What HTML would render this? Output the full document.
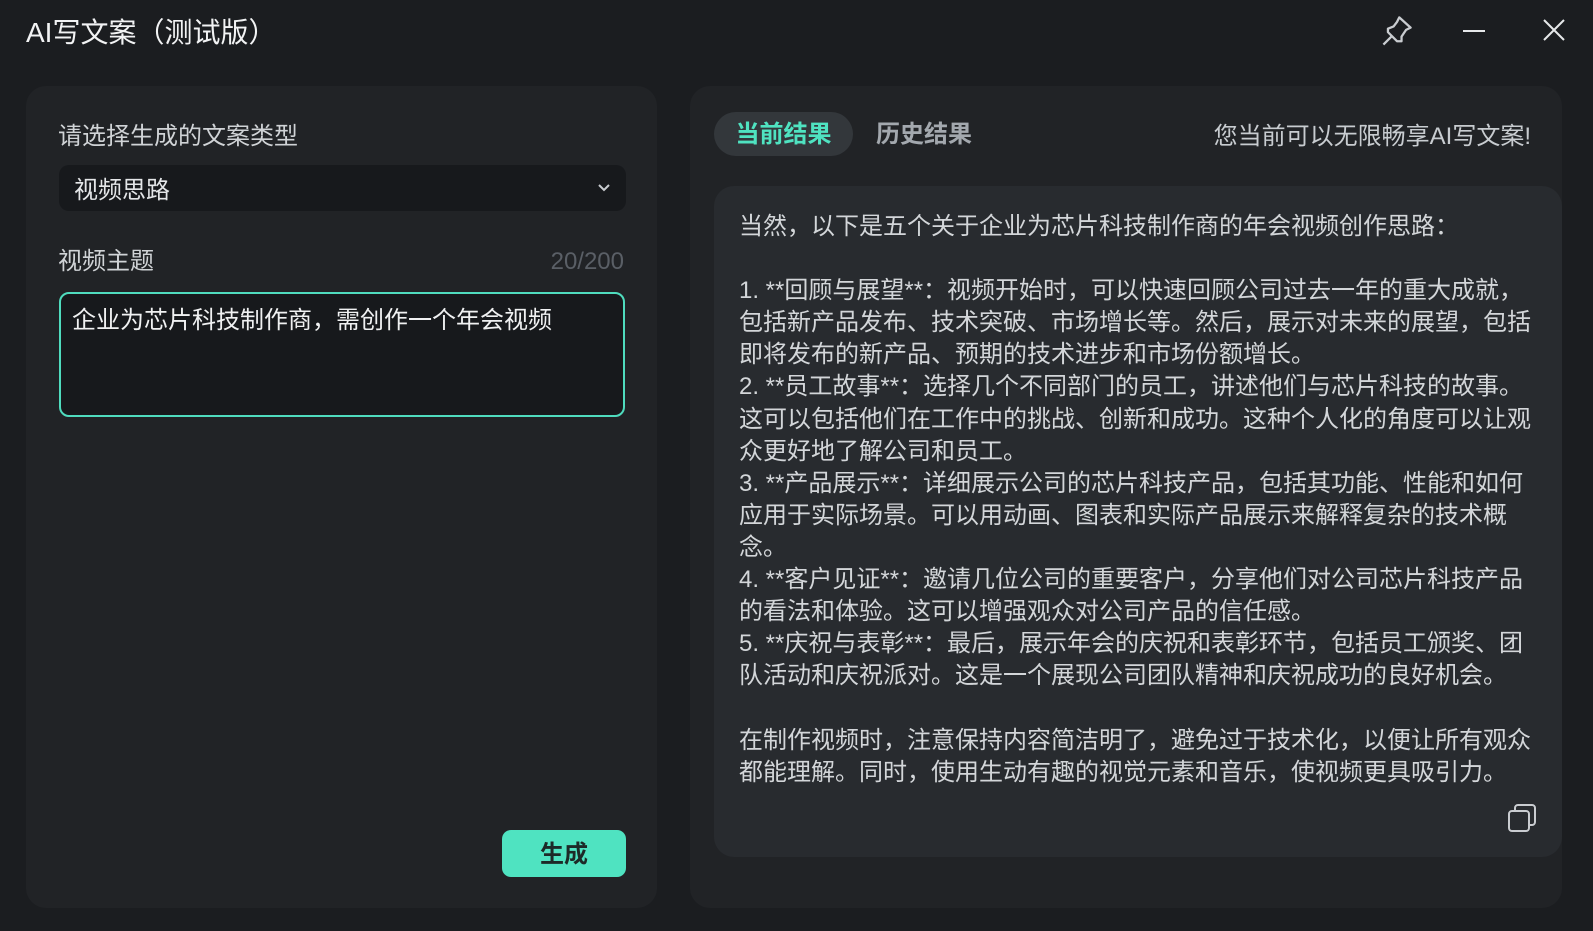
<!DOCTYPE html>
<html><head><meta charset="utf-8"><style>
*{margin:0;padding:0;box-sizing:border-box}
body{width:1593px;height:931px;background:#1b1d20;font-family:"Liberation Sans","Noto Sans CJK SC",sans-serif;color:#d6d9dc;position:relative;overflow:hidden}
.abs{position:absolute}
.title{left:26px;top:15px;font-size:28px;color:#f2f3f4;line-height:36px}
.panel{background:#212326;border-radius:20px}
.lbl{font-size:24px;line-height:30px;color:#d0d3d6}
.dd{left:59px;top:165px;width:567px;height:46px;background:#17191c;border-radius:10px}
.ta{left:59px;top:292px;width:566px;height:125px;background:#17191c;border:2px solid #4fdcbe;border-radius:10px}
.btn{left:502px;top:830px;width:124px;height:47px;background:#4fe3c1;border-radius:9px;color:#1d2a28;font-weight:bold;font-size:24px;text-align:center;line-height:49px}
.pill{left:714px;top:112px;width:139px;height:44px;background:#33373b;border-radius:22px;color:#4fe3c1;font-weight:bold;font-size:24px;text-align:center;line-height:46px}
.content{left:714px;top:186px;width:848px;height:671px;background:#282b2f;border-radius:20px}
.txt{left:739px;top:211px;font-size:24px;line-height:32.1px;color:#d3d6d9;white-space:pre}
</style></head><body>
<div class="abs title">AI写文案（测试版）</div>
<svg class="abs" style="left:1380px;top:14px" width="34" height="34" viewBox="0 0 30 30" fill="none" stroke="#c9ccd0" stroke-width="2" stroke-linejoin="round"><path d="M17 3 L27 12 L23 14 L19 20 L19 24 L15 24 L7 16 L7 13 L12 11 L15 7 Z M10 20 L3 27"/></svg>
<div class="abs" style="left:1463px;top:30px;width:22px;height:2px;background:#e6e8ea"></div>
<svg class="abs" style="left:1543px;top:19px" width="22" height="22" viewBox="0 0 22 22" stroke="#e6e8ea" stroke-width="2"><path d="M1 1 L21 21 M21 1 L1 21"/></svg>

<div class="abs panel" style="left:26px;top:86px;width:631px;height:822px"></div>
<div class="abs lbl" style="left:58px;top:122px">请选择生成的文案类型</div>
<div class="abs dd"></div>
<div class="abs lbl" style="left:74px;top:176px;color:#e4e6e8">视频思路</div>
<svg class="abs" style="left:597px;top:183px" width="14" height="10" viewBox="0 0 14 10" fill="none" stroke="#c9ccd0" stroke-width="2"><path d="M2 2 L7 7 L12 2"/></svg>
<div class="abs lbl" style="left:58px;top:247px">视频主题</div>
<div class="abs lbl" style="left:520px;top:247px;width:104px;text-align:right;color:#5a5f66">20/200</div>
<div class="abs ta"></div>
<div class="abs lbl" style="left:72px;top:306px;color:#f0f1f2">企业为芯片科技制作商，需创作一个年会视频</div>
<div class="abs btn">生成</div>

<div class="abs panel" style="left:690px;top:86px;width:872px;height:822px"></div>
<div class="abs pill">当前结果</div>
<div class="abs" style="left:876px;top:113px;font-size:24px;line-height:44px;font-weight:bold;color:#a3a8ae">历史结果</div>
<div class="abs lbl" style="left:1130px;top:122px;width:401px;text-align:right;color:#c8ccd0">您当前可以无限畅享AI写文案!</div>
<div class="abs content"></div>
<div class="abs txt">当然，以下是五个关于企业为芯片科技制作商的年会视频创作思路：

1. **回顾与展望**：视频开始时，可以快速回顾公司过去一年的重大成就，
包括新产品发布、技术突破、市场增长等。然后，展示对未来的展望，包括
即将发布的新产品、预期的技术进步和市场份额增长。
2. **员工故事**：选择几个不同部门的员工，讲述他们与芯片科技的故事。
这可以包括他们在工作中的挑战、创新和成功。这种个人化的角度可以让观
众更好地了解公司和员工。
3. **产品展示**：详细展示公司的芯片科技产品，包括其功能、性能和如何
应用于实际场景。可以用动画、图表和实际产品展示来解释复杂的技术概
念。
4. **客户见证**：邀请几位公司的重要客户，分享他们对公司芯片科技产品
的看法和体验。这可以增强观众对公司产品的信任感。
5. **庆祝与表彰**：最后，展示年会的庆祝和表彰环节，包括员工颁奖、团
队活动和庆祝派对。这是一个展现公司团队精神和庆祝成功的良好机会。

在制作视频时，注意保持内容简洁明了，避免过于技术化，以便让所有观众
都能理解。同时，使用生动有趣的视觉元素和音乐，使视频更具吸引力。</div>
<svg class="abs" style="left:1507px;top:803px" width="30" height="30" viewBox="0 0 30 30" fill="none" stroke="#c9ccd0" stroke-width="2"><rect x="2" y="8" width="20" height="20" rx="3"/><path d="M8 8 V5 a3 3 0 0 1 3 -3 H25 a3 3 0 0 1 3 3 V19 a3 3 0 0 1 -3 3 H22"/></svg>
</body></html>
